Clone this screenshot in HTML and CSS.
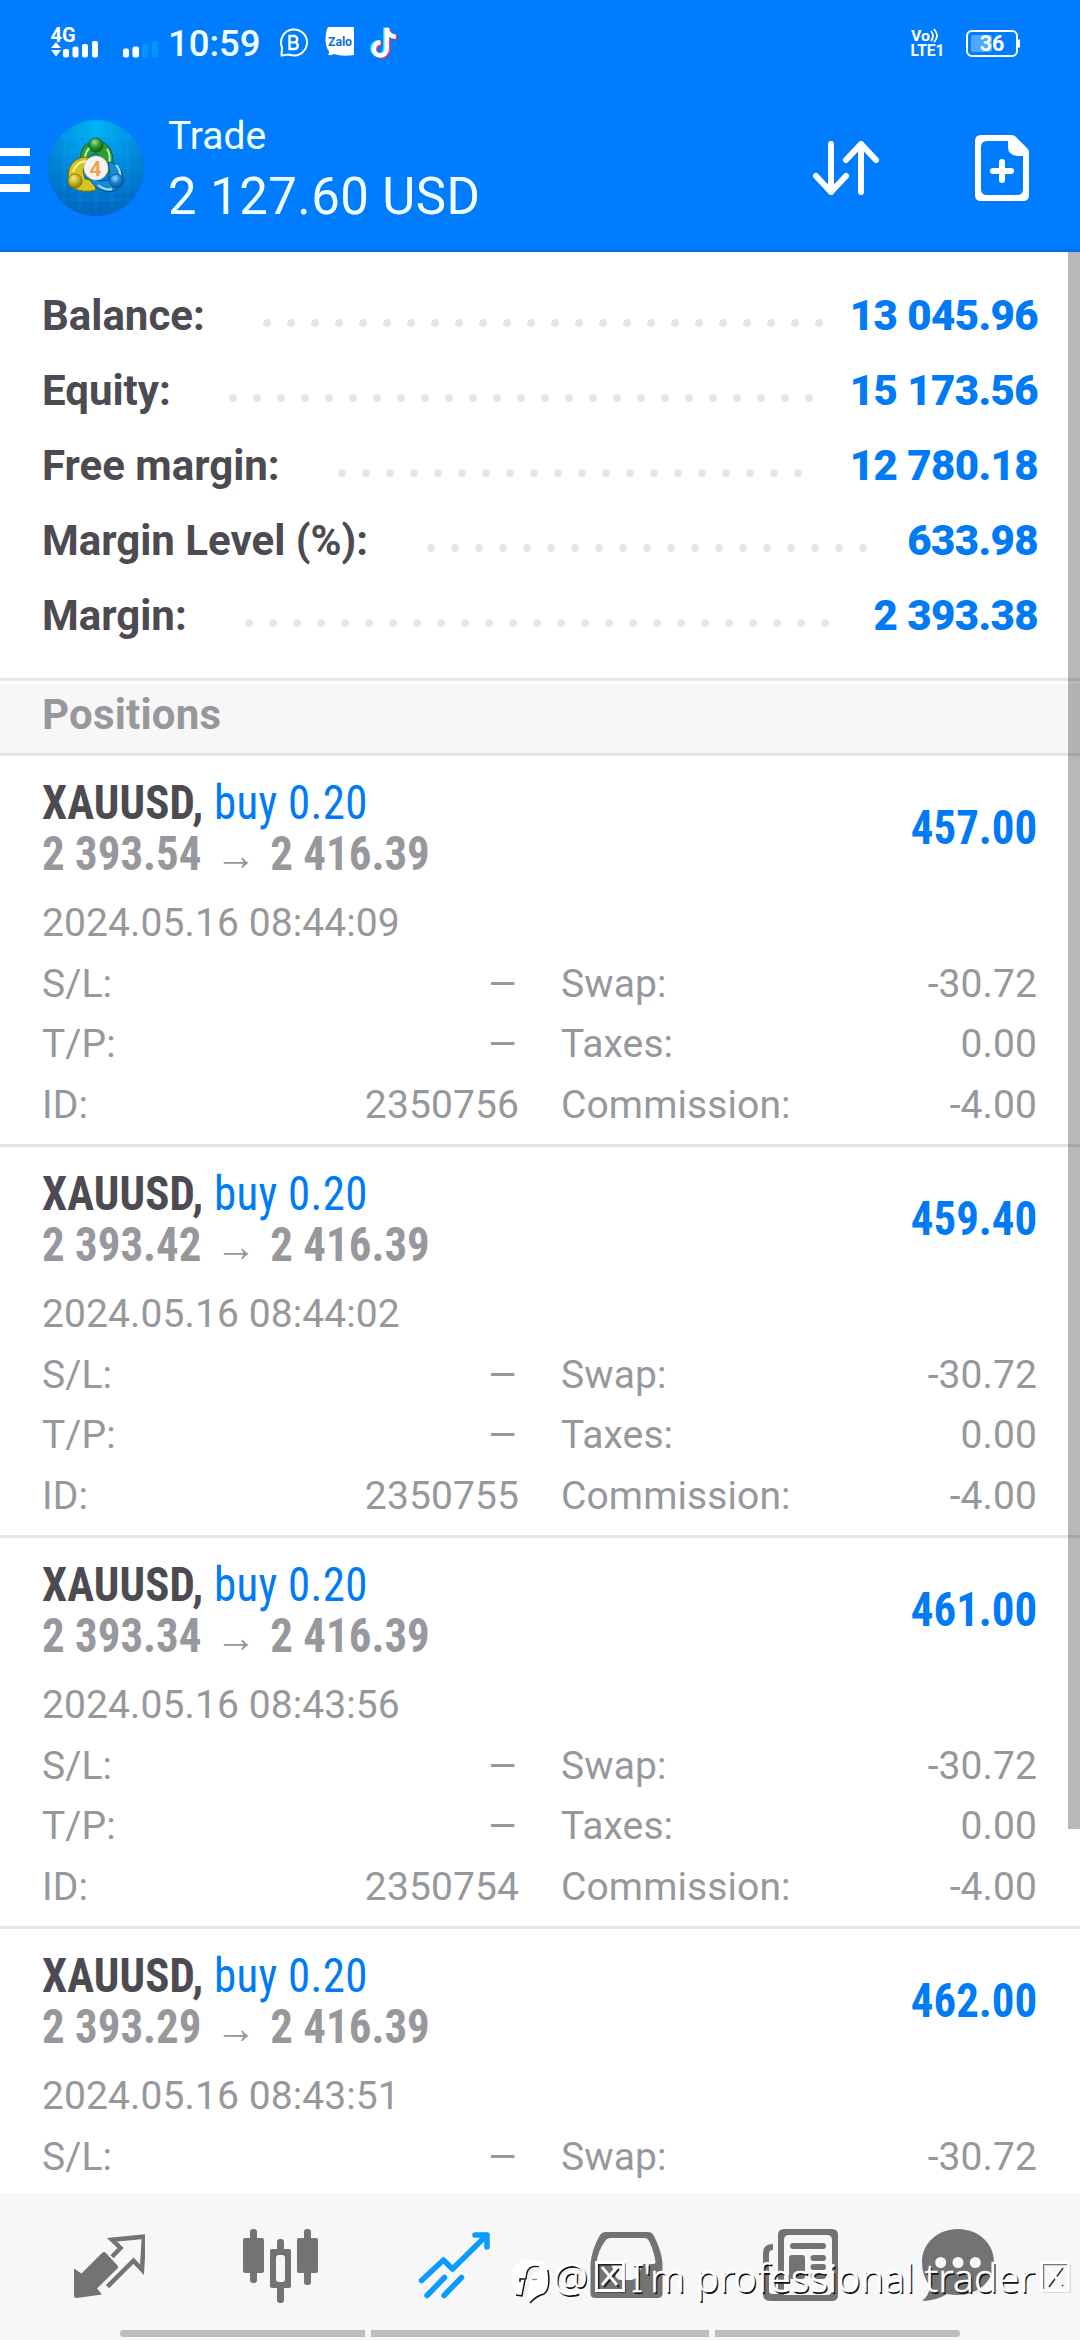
FILE: index.html
```html
<!DOCTYPE html>
<html lang="en">
<head>
<meta charset="utf-8">
<title>Trade</title>
<link rel="stylesheet" href="styles.css">
</head>
<body>
<div class="screen">
  <header class="header">
    <div class="status">
      <svg class="sig1" width="50" height="36" viewBox="51 24 50 36" fill="#fff">
        <text x="50.500" y="42" font-size="20.500" font-weight="700" textLength="25" lengthAdjust="spacingAndGlyphs">4G</text>
        <path d="M51 48l5-6 5 6zM51 50h10l-5 6.500z"/>
        <rect x="63" y="49" width="6" height="8.500" rx="2"/><rect x="72.500" y="46.500" width="6" height="11" rx="2"/><rect x="82" y="44" width="6" height="13.500" rx="2"/><rect x="92" y="41" width="6" height="16.500" rx="2"/>
      </svg>
      <svg class="sig2" width="36" height="36" viewBox="123 24 36 36" fill="#fff">
        <rect x="123" y="48.500" width="6" height="9" rx="2"/><rect x="132.500" y="46.500" width="6.500" height="11" rx="2"/>
        <g fill="#0096ff"><rect x="142" y="44" width="6" height="13.500" rx="2"/><rect x="152" y="41" width="6" height="16.500" rx="2"/></g>
      </svg>
      <span class="clock">10:59</span>
      <svg class="biz" width="30" height="36" viewBox="279 24 30 36" fill="none" stroke="#fff" stroke-width="2">
        <path d="M281.500 55.500l.5-8A13 13 0 1 1 289 54.500z" stroke-linejoin="round"/>
        <path d="M289.500 36v13h5a3.300 3.300 0 0 0 0-6.600h-5h4.500a3.200 3.200 0 0 0 0-6.400z" stroke-width="2.400"/>
      </svg>
      <svg class="zalo" width="30" height="36" viewBox="325 24 30 36">
        <path d="M328 27h26v28q-12 2-20-1-3 2-6 .5 1.500-1 1-3-3-4-3.500-11 0-9 2.500-13.500z" fill="#fff"/>
        <text x="328" y="45.500" font-size="13" font-weight="700" fill="#0a6fd8" textLength="24" lengthAdjust="spacingAndGlyphs">Zalo</text>
      </svg>
      <svg class="tiktok" width="30" height="36" viewBox="370 24 30 36" fill="none" stroke-width="4.600">
        <path d="M380.500 42.500a6.500 6.500 0 1 0 6.300 6.500V28c.5 5 4 8.500 9 8.800" stroke="#ff2d62" transform="translate(1.300 1)"/>
        <path d="M380.500 42.500a6.500 6.500 0 1 0 6.300 6.500V28c.5 5 4 8.500 9 8.800" stroke="#1fe5f0" transform="translate(-1.500 -.5)"/>
        <path d="M380.500 42.500a6.500 6.500 0 1 0 6.300 6.500V28c.5 5 4 8.500 9 8.800" stroke="#fff"/>
      </svg>
      <svg class="volte" width="34" height="36" viewBox="911 24 34 36" fill="#fff">
        <text x="911" y="41" font-size="15.500" font-weight="700" textLength="19" lengthAdjust="spacingAndGlyphs">Vo</text>
        <path d="M931 31q4 5 0 10M934 29q6 7 0 13" fill="none" stroke="#fff" stroke-width="1.800"/>
        <text x="910.500" y="55.500" font-size="16" font-weight="700" textLength="34" lengthAdjust="spacingAndGlyphs">LTE1</text>
      </svg>
      <svg class="battery" width="56" height="36" viewBox="965 24 56 36">
        <rect x="967" y="31" width="50" height="25" rx="5" fill="none" stroke="#fff" stroke-width="2"/>
        <rect x="971" y="35" width="21" height="17" rx="2" fill="#4da6ff"/>
        <path d="M1018 39.500h2v8h-2z" fill="#fff"/>
        <text x="992" y="51.300" font-size="21.500" font-weight="700" fill="#fff" text-anchor="middle">36</text>
      </svg>
    </div>
    <div class="appbar">
      <div class="menu"><i></i><i></i><i></i></div>
      <svg class="logo" width="96" height="96" viewBox="0 0 96 96">
        <defs>
          <radialGradient id="sky" cx=".5" cy=".05" r=".95"><stop offset="0" stop-color="#00b4f4"/><stop offset=".5" stop-color="#008bdf"/><stop offset="1" stop-color="#0064bd"/></radialGradient>
          <radialGradient id="gr" cx=".4" cy=".3" r=".7"><stop offset="0" stop-color="#9be08f"/><stop offset=".5" stop-color="#2f9a37"/><stop offset="1" stop-color="#0c5f1c"/></radialGradient>
          <radialGradient id="ye" cx=".4" cy=".3" r=".7"><stop offset="0" stop-color="#f4ee8b"/><stop offset=".5" stop-color="#c9b91d"/><stop offset="1" stop-color="#8c7a0a"/></radialGradient>
          <radialGradient id="bl" cx=".4" cy=".3" r=".7"><stop offset="0" stop-color="#8fdcff"/><stop offset=".5" stop-color="#1888d0"/><stop offset="1" stop-color="#06518e"/></radialGradient>
        </defs>
        <circle cx="48" cy="48" r="48" fill="url(#sky)"/>
        <path d="M16 14v68M32 5v86M48 1v94M64 5v86M80 14v68M14 16h68M5 32h86M1 48h94M5 64h86M14 80h68" stroke="#59c8ff" stroke-opacity=".16" fill="none"/>
        <path d="M33 45C30 28 39 22 48 21s18 8 17 22c-1 9-7 13-11 14l-1-8 3-8-8-8-8 5z" fill="#2f9a37" stroke="#135f1c"/>
        <path d="M37 37c1-7 5-10 9-11M59 29q4 6 2 15" stroke="#b9efb0" stroke-width="2" fill="none"/>
        <path d="M40 37C25 37 18 48 21 62c3 9 16 11 27 8l-2-9-9-2-2-8z" fill="#d5c51f" stroke="#7a6b0a"/>
        <path d="M25 52q3-10 13-11" stroke="#fbf6a5" stroke-width="2" fill="none"/>
        <path d="M60 42c10 1 15 8 15 19-2 9-12 13-22 9-7-3-10-8-11-12l11 3 7-1 2-7z" fill="#188bd4" stroke="#07508d"/>
        <path d="M68 45q5 5 4 12M50 65q8 6 14 4" stroke="#a6e2ff" stroke-width="2" fill="none"/>
        <circle cx="48" cy="25" r="7" fill="url(#gr)" stroke="#0e5a1a" stroke-width=".8"/>
        <circle cx="27" cy="61" r="7" fill="url(#ye)" stroke="#7a6b0a" stroke-width=".8"/>
        <circle cx="68.500" cy="61" r="7" fill="url(#bl)" stroke="#07508d" stroke-width=".8"/>
        <circle cx="48" cy="48" r="12" fill="#f4f4f4" stroke="#c9c9c9" stroke-width=".6"/>
        <text x="47.500" y="55.500" font-size="21" font-weight="700" fill="#f5a04a" text-anchor="middle">4</text>
      </svg>
      <div class="titles"><span class="t1">Trade</span><span class="t2">2 127.60 USD</span></div>
      <svg class="sort" width="66" height="54" viewBox="813 141 66 54" fill="none" stroke="#fff" stroke-width="6" stroke-linecap="round" stroke-linejoin="round"><path d="M831 144v48M816 176l15 16 15-16M861 192v-48M846 160l15-16 15 16"/></svg>
      <svg class="doc" width="54" height="66" viewBox="975 135 54 66"><path d="M981 135h31q2 0 3.500 1.500l12 12q1.500 1.500 1.500 3.500v43q0 6-6 6h-42q-6 0-6-6v-54q0-6 6-6zm6 6q-6 0-6 6v42q0 6 6 6h30q6 0 6-6v-33h-6q-9-1-9-9v-6z" fill="#fff" fill-rule="evenodd"/><path d="M1002 162v18M993 171h18" stroke="#fff" stroke-width="6" stroke-linecap="round"/></svg>
    </div>
  </header>

  <main class="content">
    <section class="summary">
      <div class="line"><span>Balance:</span><i class="dots" style="--n:24"></i><b>13 045.96</b></div>
      <div class="line"><span>Equity:</span><i class="dots" style="--n:25"></i><b>15 173.56</b></div>
      <div class="line"><span>Free margin:</span><i class="dots" style="--n:20"></i><b>12 780.18</b></div>
      <div class="line"><span>Margin Level (%):</span><i class="dots" style="--n:19"></i><b>633.98</b></div>
      <div class="line"><span>Margin:</span><i class="dots" style="--n:25"></i><b>2 393.38</b></div>
    </section>
    <h2 class="section">Positions</h2>

    <article class="pos">
      <div class="top"><div class="deal"><p class="sym"><b>XAUUSD,</b> buy 0.20</p><p class="price">2 393.54 <span class="arr">→</span> 2 416.39</p></div><strong class="pl">457.00</strong></div>
      <p class="date">2024.05.16 08:44:09</p>
      <div class="grid"><span>S/L:</span><span class="dash">–</span><span>Swap:</span><span>-30.72</span><span>T/P:</span><span class="dash">–</span><span>Taxes:</span><span>0.00</span><span>ID:</span><span>2350756</span><span>Commission:</span><span>-4.00</span></div>
    </article>
    <article class="pos">
      <div class="top"><div class="deal"><p class="sym"><b>XAUUSD,</b> buy 0.20</p><p class="price">2 393.42 <span class="arr">→</span> 2 416.39</p></div><strong class="pl">459.40</strong></div>
      <p class="date">2024.05.16 08:44:02</p>
      <div class="grid"><span>S/L:</span><span class="dash">–</span><span>Swap:</span><span>-30.72</span><span>T/P:</span><span class="dash">–</span><span>Taxes:</span><span>0.00</span><span>ID:</span><span>2350755</span><span>Commission:</span><span>-4.00</span></div>
    </article>
    <article class="pos">
      <div class="top"><div class="deal"><p class="sym"><b>XAUUSD,</b> buy 0.20</p><p class="price">2 393.34 <span class="arr">→</span> 2 416.39</p></div><strong class="pl">461.00</strong></div>
      <p class="date">2024.05.16 08:43:56</p>
      <div class="grid"><span>S/L:</span><span class="dash">–</span><span>Swap:</span><span>-30.72</span><span>T/P:</span><span class="dash">–</span><span>Taxes:</span><span>0.00</span><span>ID:</span><span>2350754</span><span>Commission:</span><span>-4.00</span></div>
    </article>
    <article class="pos">
      <div class="top"><div class="deal"><p class="sym"><b>XAUUSD,</b> buy 0.20</p><p class="price">2 393.29 <span class="arr">→</span> 2 416.39</p></div><strong class="pl">462.00</strong></div>
      <p class="date">2024.05.16 08:43:51</p>
      <div class="grid"><span>S/L:</span><span class="dash">–</span><span>Swap:</span><span>-30.72</span></div>
    </article>
    <div class="scrollbar"></div>
  </main>

  <footer class="tabs">
    <div class="icons">
      <svg width="72" height="75" viewBox="73 2229 72 75" fill="#737373"><path d="M74 2268.500l7.500 5 21-21q1.500-1 3 0l12 13q1 1.500 0 3L97 2288.500l5 6-25.500 3.500q-2.500 0-2.500-2.500z"/><path d="M112 2256.700l8.500-8.700-8.500-8.300 32-3-2 33-8.500-9-26 26" fill="none" stroke="#737373" stroke-width="4.500"/></svg>
      <svg width="76" height="75" viewBox="244 2229 76 75" fill="#737373"><rect x="244" y="2238" width="21" height="35" rx="2"/><rect x="251" y="2229" width="7" height="54" rx="3"/><rect x="298" y="2238" width="21" height="35" rx="2"/><rect x="305" y="2229" width="7" height="56" rx="3"/><rect x="278" y="2239" width="7" height="64" rx="3"/><rect x="271" y="2249" width="21" height="39" rx="2"/><rect x="277" y="2255" width="9" height="27" rx="3" fill="#f7f7f7"/></svg>
      <svg width="74" height="75" viewBox="417 2229 74 75" fill="none" stroke="#0b9bff" stroke-width="5.500" stroke-linecap="round" stroke-linejoin="round"><path d="M420.500 2280.500l22-20.500 9 9 34.500-34M474 2235h12v12" /><path d="M426 2295.500l17.500-18M443 2295.500l17.500-18"/></svg>
      <svg width="74" height="75" viewBox="590 2229 74 75"><path d="M606 2232h42q4 0 6 4 8 16 8.500 28v30q0 4-5 4h-62q-5 0-5-4v-30q1-14 9-28 2-4 6.500-4z" fill="#737373"/><path d="M611 2238h33q4 0 5.500 4 5 11 6 20 0 2-3 2h-9l-7 13q-2 3-5 3h-11q-3 0-4.500-3l-5-13h-12q-3 0-2.500-2 2-12 8-20 2-4 6.500-4z" fill="#f7f7f7"/></svg>
      <svg width="78" height="75" viewBox="762 2229 78 75" fill="#737373"><path d="M784 2229h48q6 0 6 6v60q0 6-6 6h-62q-7 0-7-7v-41q0-9 10-9v6q-4 0-4 4v37q0 3 3 3h6v-59q0-6 6-6zm5 6q-5 0-5 5v55h43q5 0 5-5v-50q0-5-5-5z" fill-rule="evenodd"/><rect x="790" y="2243" width="36" height="6" rx="3"/><path d="M792 2255h10q3 0 3 3v18q0 3-3 3h-10q-3 0-3-3v-18q0-3 3-3z"/><rect x="810.500" y="2255" width="15.500" height="6" rx="3"/><rect x="810.500" y="2264" width="15.500" height="6" rx="3"/><rect x="810.500" y="2273" width="15.500" height="6" rx="3"/></svg>
      <svg class="chat" width="74" height="75" viewBox="921 2229 74 75"><path d="M958 2229c20 0 36 14 36 33s-16 33-36 33q-6 0-11-1-11 7-25 7 7-5 8-15-8-10-8-24c0-19 16-33 36-33z" fill="#737373"/><g fill="#f7f7f7"><circle cx="940.700" cy="2262.500" r="5.500"/><circle cx="958" cy="2262.500" r="5.500"/><circle cx="975.300" cy="2262.500" r="5.500"/></g></svg>
    </div>
    <div class="gesture"><i></i><i class="mid"></i><i></i></div>
    <div class="mark">
      <svg width="40" height="46" viewBox="510 2258 40 46"><path d="M531 2260c14 0 18 5 18 17s-3 18-9 19q-6 1-9 6-2-4-6-5c-9-2-13-6-13-19s5-18 19-18z" fill="#fff"/><path d="M548 2270q3 19-4 24-8 2-14 9" fill="none" stroke="#111" stroke-width="1.500"/><path d="M539 2267q-10-2-12 6l-1 6h-6v3M525 2280l-3 16-6-1" fill="none" stroke="#111" stroke-width="1.500"/><path d="M540 2269.500q-9-1-10.500 6l-1 5M528 2281l-3 15" fill="none" stroke="#f1f1f1" stroke-width="4"/><path d="M532 2279.500h5" stroke="#888" stroke-width="1.300"/></svg>
      <span class="at">@</span>
      <svg class="box" width="31" height="32" viewBox="0 0 31 32" fill="none"><path d="M2.500 2.500h26v27h-26zM8 7l15 18M23 7L8 25" stroke="#222" stroke-width="2" transform="translate(1 1)"/><path d="M1.500 1.500h27v28h-27zM7 6l15 18M22 6L7 24" stroke="#fff" stroke-width="2.800"/></svg>
      <span class="say">I'm professional trader</span>
      <svg class="box" width="31" height="32" viewBox="0 0 31 32" fill="none"><path d="M2.500 2.500h26v27h-26z" stroke="#777" stroke-width="1.500" transform="translate(1 1)"/><path d="M7 6l15 18M22 6L8 25" stroke="#333" stroke-width="1.600" transform="translate(1 1)"/><path d="M1.500 1.500h27v28h-27zM7 6l15 18M21 6L7 24" stroke="#fff" stroke-width="2.800"/></svg>
    </div>
  </footer>
</div>
</body>
</html>
```
FILE: styles.css
```css
* { box-sizing: border-box; }
body { margin: 0; font-family: Roboto, "Liberation Sans", sans-serif; }
p, h2 { margin: 0; font-weight: 400; }
svg { display: block; flex: none; }
.screen { width: 1080px; height: 2340px; display: flex; flex-direction: column; overflow: hidden; background: #fff; }

.header { height: 252px; flex: none; background: #007dff; color: #f2ffff; border-bottom: 3px solid #0071e6; }
.status { display: flex; height: 84px; padding: 24px 59px 0 51px; }
.sig2 { margin-left: 22px; }
.clock { margin-left: 9px; width: 89px; font-size: 36.500px; font-weight: 500; line-height: 39px; white-space: nowrap; }
.biz { margin-left: 22px; }
.zalo { margin-left: 16px; }
.tiktok { margin-left: 15px; }
.volte { margin-left: auto; }
.battery { margin-left: 20px; }
.appbar { display: flex; align-items: flex-start; padding-right: 51px; }
.menu { width: 30px; display: flex; flex-direction: column; gap: 10px; margin-top: 64px; }
.menu i { height: 8px; background: #fff; }
.logo { margin: 36px 0 0 18px; }
.titles { display: flex; flex-direction: column; margin: 29px 0 0 24px; white-space: nowrap; }
.t1 { font-size: 39px; line-height: 46px; }
.t2 { font-size: 51px; line-height: 76px; letter-spacing: .4px; }
.sort { margin: 57px 0 0 auto; }
.doc { margin: 51px 0 0 96px; }

.content { position: relative; flex: 1; min-height: 0; overflow: hidden; }
.summary { height: 426px; padding: 26px 42px 0 42px; }
.line { display: flex; height: 75px; line-height: 75px; font-size: 42px; font-weight: 700; color: #4c4b51; }
.line b { margin-left: auto; color: #007bf5; letter-spacing: -.6px; }
.dots { width: calc(var(--n) * 24px); margin-left: 58.500px; background: radial-gradient(circle at 4px 45px, #e5e5e5 3.500px, transparent 4.300px) 0 0 / 24px 75px repeat-x; }
.section { height: 78px; border-top: 3px solid #e5e5e5; border-bottom: 3px solid #e5e5e5; background: #f7f7f7; box-shadow: inset 0 3px #fff; padding-left: 42px; font-size: 42px; font-weight: 700; line-height: 67px; letter-spacing: .2px; color: #97989c; }
.pos { height: 391px; border-bottom: 3px solid #e5e5e5; padding: 21px 43px 0 42px; color: #97989c; }
.top { display: flex; justify-content: space-between; height: 116px; font-family: "Roboto Condensed", Roboto, sans-serif; font-stretch: 75%; font-size: 48px; line-height: 51px; white-space: nowrap; }
.deal { transform: scaleX(.935); transform-origin: left top; }
.sym { color: #007bf5; letter-spacing: .35px; }
.sym b { color: #4c4b51; letter-spacing: .1px; }
.price { font-weight: 700; }
.arr { margin: 0 4px; font-family: "Liberation Sans", sans-serif; font-size: 43.500px; font-weight: 400; line-height: 0; }
.pl { margin-top: 25px; color: #007bf5; transform: scaleX(.935); transform-origin: right top; }
.date, .grid { font-size: 39px; line-height: 60.700px; letter-spacing: .1px; }
.grid { display: grid; grid-template-columns: 100px 377px 290px 1fr; }
.grid span:nth-child(even) { text-align: right; }
.grid span:nth-child(4n+3) { padding-left: 42px; }
.grid .dash { transform: translateX(-.5px) scaleX(1.22); transform-origin: right center; }
.scrollbar { position: absolute; top: 0; right: 0; width: 12px; height: 1577px; background: rgba(0, 0, 0, .28); }

.tabs { position: relative; height: 147px; flex: none; background: #f7f7f7; padding-top: 36px; }
.icons { display: flex; gap: 98.300px; padding-left: 73px; }
.chat { margin-left: -17px; }
.gesture { display: flex; gap: 6px; margin: 26px 0 0 120px; width: 840px; }
.gesture i { width: 245px; height: 7px; background: #bcbcbc; border-radius: 4px 0 0 4px; }
.gesture .mid { width: 338px; border-radius: 0; }
.gesture i:last-child { border-radius: 0 4px 4px 0; }
.mark { position: absolute; left: 510px; top: 65px; display: flex; font-family: "Noto Sans", sans-serif; font-weight: 300; font-size: 39px; line-height: 38px; color: #fff; -webkit-text-stroke: .5px #fff; text-shadow: 1.500px 1.500px 0 #111; white-space: nowrap; }
.at { width: 43px; padding-left: 3px; }
.box { margin: 3px 0 0 2px; }
.say { width: 412px; padding-left: 5px; letter-spacing: .2px; }
```
